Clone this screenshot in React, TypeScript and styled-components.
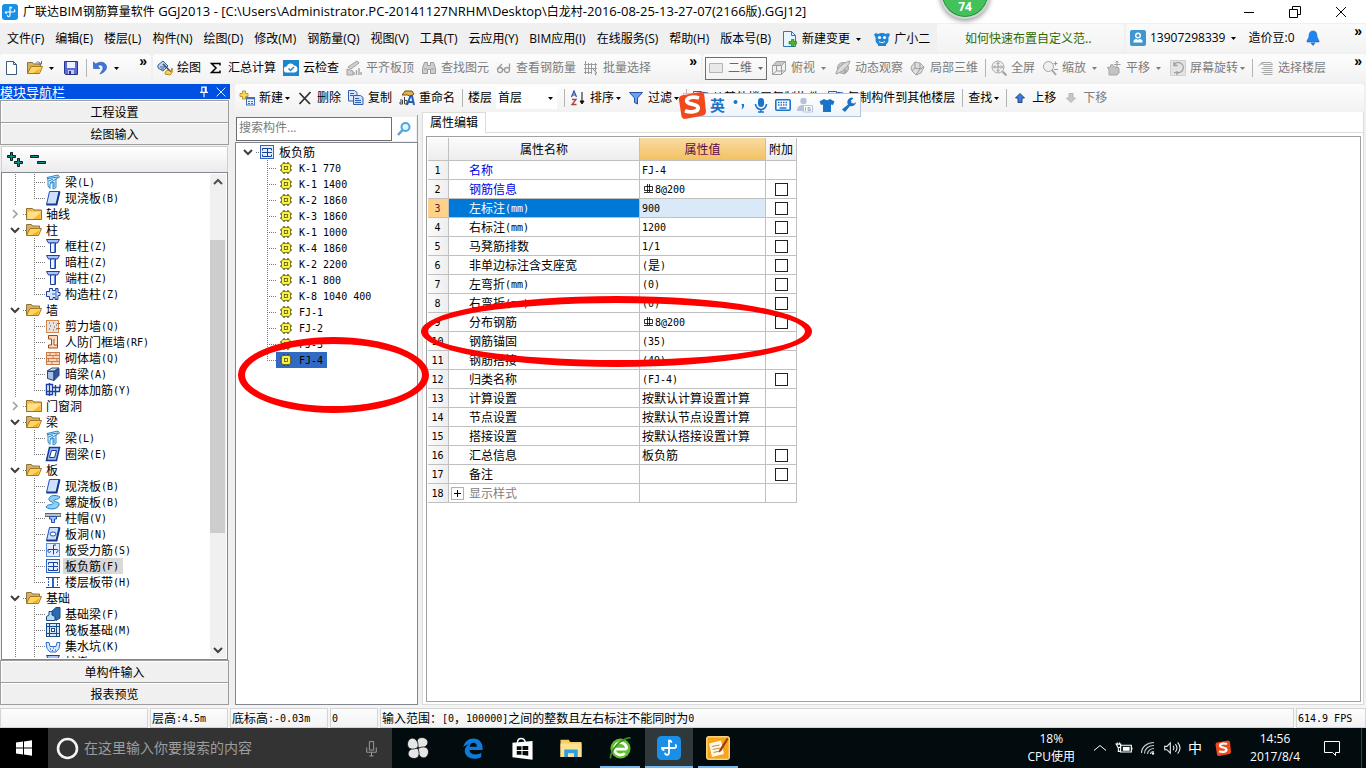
import React from 'react';
import styled, { createGlobalStyle, css } from 'styled-components';

const UI = '"Open Sans", "Noto Sans CJK SC", sans-serif';
const SONG = '"Noto Sans CJK SC", sans-serif';

const GlobalStyle = createGlobalStyle`
  *, *::before, *::after { box-sizing: border-box; }
  body { margin: 0; background: #f0f0f0; font: 12px/16px ${UI}; color: #000; }
  button, input, select { font: inherit; color: inherit; margin: 0; padding: 0; border: 0; background: none; border-radius: 0; }
  button { cursor: default; white-space: nowrap; }
  ul { list-style: none; margin: 0; padding: 0; }
`;

/* ---------- icons ---------- */

const folder = (
  <>
    <path d="M.5 13.500V2.500h6l1.500 1.500h7.500v9.500z" fill="#e9bb4c" stroke="#94702a" />
    <path d="M1.500 5.500h13v7.500h-13z" fill="#ffe08a" />
    <path d="M7 13 14.500 7v6z" fill="#f5b93a" />
  </>
);
const folderOpen = (
  <>
    <path d="M.5 13.500V2.500h5l1 1.500h7V7" fill="#d9b35a" stroke="#8d7440" />
    <path d="M.5 13.500 4 6.500H15.500L12.500 13.500z" fill="#ffd664" stroke="#a67a1c" />
    <path d="M6 13 13.500 8l-2 5z" fill="#f5b02c" />
  </>
);
const column = (
  <>
    <path d="M1.500 1.500h13L12.500 5h-9z" fill="#a9c4f5" stroke="#1d3f9c" />
    <path d="M5.500 5h5v9.500h-5z" fill="#eef4ff" stroke="#1d3f9c" />
    <path d="M9 5.500h1v8.500H9z" fill="#5d8be0" />
  </>
);
const beam = (
  <>
    <path d="M2 3.500 13 1l1.500 2-3.500 2v8.500L8 15V8L5 10v4.500L3 12V6z" fill="#d3efff" stroke="#2a86c8" />
    <path d="M3 4.500 13 3M5 9l6-4M9 8v5M4 7l4-2" stroke="#2a86c8" fill="none" />
  </>
);
const slab = (
  <>
    <path d="M4.500 1.500H14.500L11.500 14.500H1.500z" fill="#cfe0fb" stroke="#1a4fbd" />
    <path d="M1.500 14.500h10l3-13" fill="none" stroke="#123a94" strokeWidth="2" />
  </>
);
const negBar = (
  <>
    <rect x="1.500" y="1.500" width="13" height="13" fill="#e6efff" stroke="#2e63c9" />
    <path d="M3.500 6.500v-2h9v2M3 8.500h10M3.500 10.500v2h9v-2M8.500 4v9" stroke="#173f9f" fill="none" />
  </>
);
const grayStroke = { stroke: '#9b9b9b', fill: 'none' };

const ICONS: Record<string, React.ReactNode> = {
  folder,
  folderOpen,
  column,
  beam,
  slab,
  negBar,
  logo: (
    <>
      <rect width="16" height="16" rx="3" fill="#1a8fe8" />
      <path d="M8 3v8M9.600 4C9.400 3.300 8.800 3 8 3M3.300 8h8.200c1.300 0 1.700-1.200 1-2M3.300 8c0 .9.500 1.300 1.200 1.400M8 11c0 1.900-2.200 2-2.600.6" stroke="#fff" strokeWidth="1.200" fill="none" strokeLinecap="round" />
    </>
  ),
  structCol: (
    <>
      <path d="M4.500 2.500h3v2h3v-2h2.500v4h2v3h-2v4h-3v-2h-2v2h-3.500v-3h-3v-5h3z" fill="#d7e5ff" stroke="#1d3f9c" />
      <path d="M11 3v10M7 8h4" stroke="#3d6cc8" />
    </>
  ),
  shearWall: (
    <>
      <rect x="1.500" y="2.500" width="12" height="12" fill="#e6e2de" stroke="#d9864f" />
      <path d="M4 5h1M8 5h1M11 7h1M5 8h1M9 9h1M4 11h1M8 12h1M11 11h1" stroke="#555" />
      <path d="M12 5.500h3M12 10.500h3" stroke="#c2581b" />
    </>
  ),
  airWall: (
    <path d="M3.500 1.500h9v12.500h-9v-3h3v-6h-3z M9 5v6h3" fill="#ffd9bd" stroke="#a8480f" />
  ),
  brick: (
    <>
      <rect x="1.500" y="2.500" width="13" height="12" fill="#fbd9c0" stroke="#cc7a48" />
      <path d="M1 5.500h14M1 8.500h14M1 11.500h14M5 3v3M11 3v3M8 6v3M3.500 9v3M12 9v3M7 12v3" stroke="#cc7a48" />
    </>
  ),
  hiddenBeam: (
    <>
      <path d="M2 5 7 2h7l-5 3z" fill="#d6e1f4" stroke="#24457f" />
      <path d="M2.500 5.500H9v9l-6.500-2z" fill="#a9bfe4" stroke="#24457f" />
      <path d="M9 5.500 14 2.500v7l-5 5z" fill="#2f5799" stroke="#24457f" />
    </>
  ),
  masonryBar: (
    <path d="M1.500 2.500h6v10h-6zM4.500 1v13M1 9.500h14M10.500 3v11M7 5.500h8V2.500M14.500 5.500v4" fill="none" stroke="#1a3fa8" strokeWidth="1.400" />
  ),
  ringBeam: (
    <>
      <path d="M4.500 1.500H14.500L11.500 14.500H1.500z" fill="#9fbdf0" stroke="#143a9a" strokeWidth="1.500" />
      <path d="M6.500 4.500h5L9.500 11.500H4.500z" fill="#fff" stroke="#143a9a" />
    </>
  ),
  spiral: (
    <path d="M15 3C11 .5 5 1 4 4.500S9 7.500 8 9.500 2.500 9.500 1 13c4 3.500 12 2 13-2S8.500 8.500 9 6.500s4.500 0 6-3.500z" fill="#8fd0f5" stroke="#1c7fc4" />
  ),
  cap: (
    <>
      <path d="M0 3.500h16v3H0z" fill="#b9c2c9" stroke="#5c666e" />
      <path d="M4.500 6.500h7v2.500h-2v3.500h-3V9h-2z" fill="#a9c8f7" stroke="#1d4fae" />
    </>
  ),
  hole: (
    <>
      {slab}
      <ellipse cx="8" cy="8" rx="3" ry="2" fill="#fff" stroke="#1a4fbd" />
    </>
  ),
  forceBar: (
    <>
      <rect x="1.500" y="1.500" width="13" height="13" fill="#e6efff" stroke="#5b87dc" />
      <path d="M8.500 3v9.500M3 7.500h9c2 0 1 3-1 3M3 7.500v1.500c0 2 2.500 2 2.500 0M8.500 3h2.500" stroke="#173f9f" fill="none" />
    </>
  ),
  strip: (
    <>
      <path d="M1 3.500h14M1 13.500h14" stroke="#2e3f8f" />
      <path d="M3.500 4v9M12.500 4v9" stroke="#2e63c9" strokeDasharray="2 1" />
      <path d="M8 4v9" stroke="#2e63c9" strokeWidth="2" />
    </>
  ),
  foundBeam: (
    <>
      <path d="M6 6 11 1.500h4V12l-4 2.500z" fill="#2b6cb0" stroke="#154a86" />
      <path d="M1.500 14.500v-4L4 9V5.500h3V9l3 1.500v4z" fill="#b8dcf7" stroke="#154a86" />
    </>
  ),
  raft: (
    <>
      <rect x="1.500" y="1.500" width="13" height="13" fill="#d4e6f8" stroke="#174a86" />
      <path d="M4.500 2v12M11.500 2v12M2 4.500h12M2 11.500h12" stroke="#174a86" />
      <rect x="6.500" y="6.500" width="3" height="3" fill="#fff" stroke="#174a86" />
    </>
  ),
  sump: (
    <>
      <path d="M1 4.500h3l1 4h6l1-4h3l-1 6-3 3.500H5L2 10.500z" fill="#d9ebff" stroke="#2a6fcf" />
      <path d="M5 11h1M8 10h1M10 12h1M7 12.500h1" stroke="#1d3f9c" />
    </>
  ),
  gear: (
    <>
      <path d="M6 2v12M10 2v12M2 6h12M2 10h12" stroke="#3a3700" strokeWidth="1.200" />
      <rect x="3.500" y="3.500" width="9" height="9" rx="2" fill="#f8f24c" stroke="#5a5500" strokeWidth=".7" />
      <rect x="6.500" y="6.500" width="3" height="3" fill="#f8f24c" stroke="#5a5500" strokeWidth=".8" />
    </>
  ),
  newDoc: (
    <path d="M2.500 1.500h7l3 3v10h-10zM9.500 1.500v3h3" fill="#fff" stroke="#3c5a7c" />
  ),
  openDoc: (
    <>
      {folderOpen}
      <path d="M9 3.500c1-2 3-2 4.500 0M14.500 1v3h-3" fill="none" stroke="#4f6b8a" />
    </>
  ),
  save: (
    <>
      <path d="M1.500 1.500h13v13h-12l-1-1z" fill="#5a6fd6" stroke="#2a348f" />
      <path d="M4 2h8v6H4z" fill="#eef2ff" />
      <path d="M5 10h6v4H5z" fill="#c9cfe8" />
      <path d="M6 11h2v3H6z" fill="#2a348f" />
    </>
  ),
  undo: (
    <path d="M1.500 2v6.500H8L5.700 6C8 4 11 5 11 8c0 2-1.500 3.500-3 6C12 12.500 14.500 10 14.500 7c0-4.500-6-6.500-10.700-3z" fill="#3f78d8" stroke="#1d4fae" strokeWidth=".6" />
  ),
  paint: (
    <>
      <path d="M1 5 6 1l5 5-5 5-5-3z" fill="#bcd6f2" stroke="#3e618c" />
      <path d="M6 4 14 12" stroke="#23476f" strokeWidth="1.500" />
      <path d="M8 14c0-4 3-5 6-2l1-4c1 3 0 6-2 7z" fill="#ffce4a" stroke="#a8740f" strokeWidth=".8" />
      <path d="M3 7h5M4 9h3" stroke="#3e618c" />
    </>
  ),
  sigma: (
    <path d="M12 5.500v-2H3.500L8 8l-4.500 4.500H12v-2" fill="none" stroke="#000" strokeWidth="1.500" />
  ),
  cloud: (
    <>
      <rect width="16" height="16" fill="#1e86cc" />
      <path d="M4 12.500a3 3 0 0 1-.3-6A4 4 0 0 1 11 5.500a3.600 3.600 0 0 1 1 7z" fill="#fff" />
      <path d="m5.500 8.500 2 2L11 7" stroke="#1e86cc" strokeWidth="1.500" fill="none" />
    </>
  ),
  alignTop: (
    <>
      <path d="M2 7 11 1l2 2-8 6zM1 9l6 2v4H1z" fill="#d0d0d0" stroke="#a0a0a0" />
      <path d="M8 12v3M10.500 10v5M13 8v7M15 12v3" stroke="#a8a8a8" strokeWidth="1.500" />
    </>
  ),
  binoculars: (
    <path d="M3.500 2.500h3v3h3v-3h3l2 6v5h-5v-4h-3v4h-5v-5zM3 9h3M10 9h3" fill="#cfcfcf" stroke="#9a9a9a" />
  ),
  glasses: (
    <g {...grayStroke} strokeWidth="1.300">
      <circle cx="4" cy="10" r="2.500" />
      <circle cx="11" cy="10" r="2.500" />
      <path d="M6.500 9.500h2M1.500 9 6 4M13.500 10V3.500" />
    </g>
  ),
  batch: (
    <>
      <path d="M2.500 1v13M5.500 3v11M8.500 3v11M1 4.500h13M1 8.500h13M1 12.500h7M12.500 3v8" {...grayStroke} />
      <path d="m9 8 5 5-2 .5 1 2" fill="#ddd" stroke="#999" />
    </>
  ),
  flat2d: <path d="M1.500 3.500h13v9h-13z" fill="#e8e8e8" stroke="#b5b5b5" />,
  cube: (
    <>
      <path d="M1.500 5.500 5.500 1.500h9v9l-4 4h-9z" fill="#efefef" stroke="#a0a0a0" />
      <path d="M1.500 5.500h9v9M10.500 5.500l4-4M5.500 2v9h9M5.500 11l-4 3.500" {...grayStroke} />
      <path d="m2 5 4-3h8l-4 3z" fill="#c8c8c8" />
    </>
  ),
  orbit: (
    <>
      <circle cx="8" cy="8" r="5.500" fill="#c4c4c4" stroke="#a5a5a5" />
      <path d="M1 14C1 9 9 2 15 1 14 6 6 13 1 14z" fill="#dcdcdc" stroke="#a0a0a0" />
      <path d="m9 9 4 2-4 4z" fill="#aaa" />
    </>
  ),
  partial3d: (
    <>
      <path d="M1 7 5 2l5 1 4 4-3 6-5 2-4-4z" fill="#dedede" stroke="#a5a5a5" />
      <path d="M5 2v6l5 1V3M2 11l3-3M10 9l4-2M10 9l-4 6" {...grayStroke} />
    </>
  ),
  fullScreen: (
    <>
      <circle cx="7" cy="7" r="6" fill="#efefef" stroke="#a5a5a5" />
      <path d="M7 2.500v9M2.500 7h9M5.500 4 7 2.500 8.500 4M5.500 10 7 11.500 8.500 10M4 5.500 2.500 7 4 8.500M10 5.500 11.500 7 10 8.500" {...grayStroke} />
      <path d="m11.500 11.500 4 4" stroke="#a0a0a0" strokeWidth="2" />
    </>
  ),
  zoomIcon: (
    <>
      <circle cx="6.500" cy="6.500" r="5" fill="#efefef" stroke="#a5a5a5" />
      <path d="m10 10 4 5" stroke="#a5a5a5" strokeWidth="2" />
      <path d="M11.500 3.500h4M13.500 1.500v4M12 9.500h4" {...grayStroke} />
    </>
  ),
  pan: (
    <>
      <path d="M3 15V10L1.500 7.500l3-.5V5l2-.5L8 7h2l3 1v5l-2 2z" fill="#c4c4c4" stroke="#a5a5a5" />
      <path d="M11 1v7M8 4.500h6.500M9.500 2.500 11 1l1.500 1.500" {...grayStroke} />
    </>
  ),
  rotate: (
    <>
      <path d="M.5 .5h15v15H.5z" fill="#e4e4e4" stroke="#d0d0d0" />
      <path d="M4 5a5 5 0 1 1 2 7M4 2v3.500h3.500M4 13l3-1 0 3" fill="none" stroke="#9b9b9b" strokeWidth="1.300" />
    </>
  ),
  pickFloor: (
    <>
      <path d="M4 2.500h9l1.500 2H5.500zM5.500 6.500h9M3.500 8.500h11M5.500 10.500h9M3.500 12.500h11M5.500 14.500h9" fill="none" stroke="#a8a8a8" />
      <path d="M.5 6 4 2.500V5" fill="none" stroke="#a8a8a8" />
    </>
  ),
  docPlus: (
    <>
      <path d="M1.500 .5h8l4 4v11h-12zM9.500 .5v4h4" fill="#e9f5ff" stroke="#2a7ab8" />
      <path d="M9.500 8.500h2.500v2h2.500v2.500h-2.500v2.500h-2.500v-2.500h-2.500v-2.500h2.500z" fill="#48b82c" stroke="#2b7e17" strokeWidth=".7" />
    </>
  ),
  mascot: (
    <>
      <path d="M0 3.500C1 2 3 2 4 3c2-1.500 6-1.500 8 0 1-1 3-1 4 .5L14.300 7c.7 3-.3 5-2.300 6.500V15H4v-1.500C2 12 1 10 1.700 7z" fill="#1e86d8" />
      <circle cx="5.500" cy="6.500" r="1.600" fill="#fff" />
      <circle cx="10.500" cy="6.500" r="1.600" fill="#fff" />
      <path d="M5 10.500c2 1.500 4 1.500 6 0" stroke="#fff" fill="none" />
    </>
  ),
  user: (
    <>
      <rect width="16" height="16" rx="2" fill="#3f97cf" />
      <circle cx="8" cy="5.500" r="2.300" fill="none" stroke="#fff" strokeWidth="1.400" />
      <path d="M3.500 12.500V11c1-2 2.500-2 3-2l1.500 1 1.500-1c1 0 2.500.5 3 2v1.500z" fill="#fff" />
    </>
  ),
  bell: (
    <path d="M8 1c3.500 0 4 3 4 6l2 4v1H2v-1l2-4c0-3 .5-6 4-6zM6 13h4l-2 2.500z" fill="#1e86f0" stroke="#1560b8" strokeWidth=".6" />
  ),
  create: (
    <>
      <path d="M3.500 1h3v2.500H9v3H6.500V9h-3V6.500H1v-3h2.500z" fill="#ffd94d" stroke="#a8842a" strokeWidth=".8" />
      <rect x="7.500" y="7.500" width="8" height="7.500" fill="#eaf2ff" stroke="#456fb5" />
      <path d="M7.500 8.500h8" stroke="#456fb5" strokeWidth="1.500" />
      <path d="M9 11.500h2M12 11.500h2M9 13.500h2M12 13.500h2" stroke="#456fb5" />
    </>
  ),
  remove: <path d="M2.500 3 13 14M13.500 2 2.500 14" stroke="#333" strokeWidth="1.800" fill="none" />,
  copy: (
    <>
      <path d="M.5 .5h6l2.500 2v8.500H.5z" fill="#dce9fb" stroke="#2f5fb0" />
      <path d="M5.500 5.500h7l2.500 2V14.500h-9.500z" fill="#cfe0f8" stroke="#2f5fb0" />
      <path d="M7 8.500h4M7 10.500h6M7 12.500h6M2 3.500h4M2 5.500h3" stroke="#2f5fb0" />
    </>
  ),
  rename: (
    <>
      <path d="M3 5 6 1h7l2 3-4 3-2-2z" fill="#e3b14a" stroke="#6d541d" />
      <path d="M8 15 11.500 6H13l2 9M10 12h4" fill="none" stroke="#1f5fbf" strokeWidth="2" />
      <path d="M1 10h2.500v4H1v-2h2.500M5.500 7v7H8v-3.500H5.500" fill="none" stroke="#444" />
    </>
  ),
  sortAz: (
    <>
      <path d="M1.500 7 4 1l2.500 6M2.500 5h3" fill="none" stroke="#2c4f9e" strokeWidth="1.200" />
      <path d="M2 9.500h4L2 14.500h4.500" fill="none" stroke="#b04040" strokeWidth="1.300" />
      <path d="M12 2v11M10 11 12 14l2-3z" fill="#111" stroke="#111" />
    </>
  ),
  filter: <path d="M1.500 2.500h13L9.500 8v6l-3-1.500V8z" fill="#6fa2ea" stroke="#2350a8" />,
  copyFloor: (
    <>
      <path d="M1.500 1.500h8v10h-8z" fill="#e3edfb" stroke="#2f5fb0" />
      <path d="M3 4h5M3 6h5M3 8h5" stroke="#2f5fb0" />
      <path d="M9 4c3-3 6-1 5.500 3M13 3h3" stroke="#2f5fb0" fill="none" strokeWidth="1.500" />
    </>
  ),
  up: <path d="M8 3.500 12.500 8H10v4.500H6V8H3.500z" fill="#3e7be0" stroke="#1d4590" />,
  down: <path d="M8 12.500 12.500 8H10V3.500H6V8H3.500z" fill="#c8c8c8" stroke="#b5b5b5" />,
  magnifier: (
    <>
      <circle cx="9.500" cy="6" r="4" fill="#e6f5ff" stroke="#4aa8e0" strokeWidth="2" />
      <path d="M6.500 9 2 14" stroke="#4aa8e0" strokeWidth="2.500" />
    </>
  ),
  expandAll: (
    <path d="M3.500 .5h2v3h3v2h-3v3h-2v-3h-3v-2h3zM10.500 6.500h2v3h3v2h-3v3h-2v-3h-3v-2h3z" fill="#0e8f87" stroke="#022" />
  ),
  collapseAll: <path d="M.5 3.500h8v2h-8zM7.500 9.500h8v2h-8z" fill="#0e8f87" stroke="#022" />,
  chevronDown: <path d="m4 6 4 4 4-4" fill="none" stroke="#404040" strokeWidth="2" />,
  chevronRight: <path d="m6 4 4 4-4 4" fill="none" stroke="#a0a0a0" strokeWidth="1.600" />,
  chevronUp: <path d="m4 10 4-4 4 4" fill="none" stroke="#505050" strokeWidth="2" />,
  pin: <path d="M5.500 2.500h5v6h-5zM9.500 3v5M3.500 8.500h9M8 9v5" fill="none" stroke="#fff" strokeWidth="1.300" />,
  close: <path d="m3 3 10 10M13 3 3 13" fill="none" stroke="currentColor" />,
  minimize: <path d="M3 8.500h10" stroke="#000" />,
  restore: <path d="M5.500 5.500v-3h8v8h-3M2.500 5.500h8v8h-8z" fill="none" stroke="#000" />,
  comma: (
    <>
      <circle cx="4.500" cy="5" r="2" fill="#1b73c8" />
      <path d="M10.500 7h2.500c.5 2.500-.5 4.500-2.500 5.500l.8-3z" fill="#1b73c8" />
    </>
  ),
  mic: (
    <>
      <rect x="5" y="1" width="6" height="9" rx="3" fill="#1b73c8" />
      <path d="M2.500 7a5.500 5.500 0 0 0 11 0M8 12v3M5 15h6" fill="none" stroke="#1b73c8" strokeWidth="1.600" />
    </>
  ),
  keyboard: (
    <>
      <rect x=".8" y="2.800" width="14.400" height="10.400" rx="1" fill="#fff" stroke="#1b73c8" strokeWidth="1.600" />
      <path d="M3 5.500h10M3 8h10" stroke="#1b73c8" strokeWidth="1.500" strokeDasharray="1.500 1" />
      <path d="M4.500 11h7" stroke="#1b73c8" strokeWidth="1.500" />
    </>
  ),
  person: (
    <>
      <circle cx="6.500" cy="4" r="3.200" fill="#b4c3d8" />
      <path d="M0 14c0-5 3-6 6.500-6S13 10 13 14z" fill="#b4c3d8" />
      <path d="M6.500 8.500h9v6.500h-9z" fill="#fff" stroke="#b4c3d8" />
      <path d="M8.500 10v4M13.500 10.500h-2.500v3h2.500v-1.500H11" fill="none" stroke="#9fb1ca" />
    </>
  ),
  shirt: <path d="M5 2c1.500 1.500 4.500 1.500 6 0l4.500 2.500L14 8l-2-.5V15H4V7.500L2 8 .5 4.500z" fill="#1b73c8" />,
  wrench: <path d="M15 5a4.500 4.500 0 0 1-6 4l-5 6-3-2.500L7 7.500A4.500 4.500 0 0 1 12.500 1L10 3.500l.5 2.500 2.500.5z" fill="#1b73c8" />,
  sogou: (
    <>
      <path d="M2 2.500 13 .5q1.500 0 2 1.500l1 10q0 1.500-1.500 2L4 16q-1.500 0-2-1.500L.5 4.500Q.5 3 2 2.500z" fill="#f04a1c" />
      <path d="M12 4C9 3 5 3.500 5 5.700 5 8 11.500 7 11.500 9.700 11.500 12 7 12.500 4 11.300" fill="none" stroke="#fff" strokeWidth="2.200" />
    </>
  ),
  windows: <path d="M0 2.500 7 1.600v6H0zM8 1.400 16 .3v7.300H8zM0 8.500h7v6l-7-.9zM8 8.500h8v7.200l-8-1.100z" fill="#fff" />,
  cortana: <circle cx="8" cy="8" r="6.600" fill="none" stroke="#f4f4f4" strokeWidth="1.800" />,
  taskMic: <path d="M6 1.500h4v8H6zM3.500 7v4.500h9V7M8 11.500V15M6 15h4" fill="none" stroke="#a0a0a0" strokeWidth=".9" />,
  fan: (
    <g fill="#e6e6e6" stroke="#020b0e" strokeWidth=".5">
      <path d="M8.300 7.700C6.500 5 7 1 10.500 1 14 1 15.500 4 14 6S10 8.500 8.300 7.700z" />
      <path d="M8.300 8.300C11 6.500 15 7 15 10.500c0 3.500-3 5-5 3.500S7.500 10 8.300 8.300z" />
      <path d="M7.700 8.300C9.500 11 9 15 5.500 15 2 15 .5 12 2 10s4-2.500 5.700-1.700z" />
      <path d="M7.700 7.700C5 9.500 1 9 1 5.500 1 2 4 .5 6 2s2.500 4 1.700 5.700z" />
    </g>
  ),
  edge: (
    <path d="M1 7.500C1.500 3.500 4.500 1 8.300 1c4.200 0 6.700 3 6.700 7v1.500H5.500c0 2.200 2 3.200 4.200 3.200 1.800 0 3.300-.5 4.300-1.200v3c-1.200.8-3 1.300-5 1.300C4.500 15.800 2 13 2 10c0-2 1.200-3.800 3-4.800-2 .3-3.200 1.200-4 2.300zM5.600 7h5.200c0-1.700-.8-2.900-2.500-2.900S5.800 5.400 5.600 7z" fill="#0f7ad8" />
  ),
  store: (
    <>
      <path d="M4.500 4c0-4 5-4 5.500 0" fill="none" stroke="#fff" />
      <path d="M1 4 15 2.800v13L1 14z" fill="#fff" />
      <path d="M4 6.500h3.300V9H4zM8 6.300h4V9H8zM4 9.700h3.300v2.700H4zM8 9.700h4V13l-4-.4z" fill="#020b0e" />
    </>
  ),
  explorer: (
    <>
      <path d="M1 2.500h5.500l1 1.500H15v10H1z" fill="#f7cd5c" />
      <path d="M1 5h14v9H1z" fill="#fde294" />
      <path d="M3.500 14V9h9v5h-2.500v-2.500H6V14z" fill="#2f9ee0" />
    </>
  ),
  browser: (
    <>
      <circle cx="8" cy="8" r="7" fill="#5fbf2d" />
      <path d="M12.300 8.500a4.300 4.300 0 1 0-1.200 2.700M4 8.500h8.300" fill="none" stroke="#fff" strokeWidth="1.900" />
      <path d="M1 15C1 9 8 1 15 .5" fill="none" stroke="#2f8f17" strokeWidth="1.200" />
    </>
  ),
  note: (
    <>
      <rect x=".5" y=".5" width="15" height="15" rx="1.500" fill="#f6a41c" stroke="#fbd27a" />
      <path d="M2 5 10 3l2 9-8 2z" fill="#fff8e6" />
      <path d="m4 7 5-1M4.500 9l5-1M5 11l4-1" stroke="#b8954a" strokeWidth=".7" />
      <path d="M14 1 9 9l-.5 2 1.700-1L15 2z" fill="#9a3c12" />
    </>
  ),
  trayUp: <path d="m2 10.500 6-5 6 5" fill="none" stroke="#fff" />,
  battery: (
    <>
      <path d="M5 5.500h9.500v6H5zM15 7.500v2" fill="none" stroke="#fff" />
      <path d="M7 7h6v3.500H7z" fill="#fff" />
      <path d="M1 4.500h4v2.500l-2 1zM2 3v1.500M4 3v1.500M3 8v3h2" fill="none" stroke="#fff" />
    </>
  ),
  wifi: (
    <>
      <path d="M1.500 13C1.500 7 7 2.500 14 2.500M4.500 13.500C4.500 9 8.500 5.500 14 5.500M7.500 14c0-3 3-5.500 6.500-5.500M10.500 14c0-1.500 1.500-2.500 3.500-2.500" fill="none" stroke="#c8cccd" strokeWidth="1.200" />
      <circle cx="13" cy="13.500" r="1.200" fill="#fff" />
    </>
  ),
  speaker: (
    <path d="M1.500 6.500h2l3-3v9l-3-3h-2zM9 6c1 1.500 1 2.500 0 4M11 4.500c2 2.500 2 4.500 0 7M13 3c3 3.500 3 6.500 0 10" fill="none" stroke="#e6e6e6" />
  ),
  notify: <path d="M.5 1.500h15v11h-4v3l-3-3h-8z" fill="none" stroke="#fff" />,
};

const Svg = styled.svg`
  display: block;
  flex: none;
`;

const Icon = ({ name, size = 16 }: { name: string; size?: number }) => (
  <Svg width={size} height={size} viewBox="0 0 16 16" aria-hidden="true">
    {ICONS[name]}
  </Svg>
);

const CaretSvg = styled(Svg)`
  pointer-events: none;
`;
const Caret = () => (
  <CaretSvg width="5" height="3" viewBox="0 0 5 3" aria-hidden="true">
    <path d="M0 0h5L2.500 3z" fill="currentColor" />
  </CaretSvg>
);

/* Song-style text: half-width Latin glyphs beside full-width Chinese ones */
const Song = styled.span`
  font-family: ${SONG};
  white-space: pre;
`;
const Latin = styled.span`
  font: 10px/1 "DejaVu Sans Mono", monospace;
  vertical-align: 1px;
`;
const splitRuns = (text: string, Run: React.ElementType) =>
  text.split(/([\x20-\x7e]+)/).map((run, i) => (i % 2 ? <Run key={i}>{run}</Run> : run));

const T = ({ children }: { children: string }) => <Song>{splitRuns(children, Latin)}</Song>;

/* ---------- shell ---------- */

const Shell = styled.div`
  position: relative;
  display: flex;
  flex-direction: column;
  height: 100vh;
  overflow: hidden;
`;

const TitleBar = styled.header`
  position: relative;
  flex: none;
  display: flex;
  align-items: center;
  gap: 5px;
  height: 23px;
  padding: 0 17px 0 2px;
  background: #fff;
`;
const Title = styled.h1`
  flex: 1;
  margin: 0;
  font-size: 12px;
  font-weight: 400;
  white-space: nowrap;
`;
const TitleLatin = styled.span`
  font-size: 13px;
`;
const WindowButtons = styled.div`
  display: flex;
  gap: 30px;
`;

const FloatBall = styled.div`
  position: absolute;
  z-index: 3;
  top: -31px;
  left: 940px;
  width: 50px;
  height: 50px;
  border: 2px solid #d5d5d5;
  border-radius: 50%;
  background: #44c25a;
  box-shadow: inset 0 0 0 1px #1f8f3a, 0 2px 5px #0006;
  color: #fff;
  font: 700 12px/14px "Open Sans", sans-serif;
  text-align: center;
  padding-top: 29px;
`;

const MenuBar = styled.nav`
  flex: none;
  display: flex;
  height: 31px;
  padding-top: 1px;
`;
const MenuList = styled.div`
  display: flex;
  align-items: center;
  gap: 11px;
  flex: none;
  width: 937px;
  padding-left: 7px;
`;
const MenuItem = styled.button`
  display: flex;
  align-items: center;
  gap: 4px;
`;
const MenuPanel = styled.div<{ $grow?: boolean }>`
  display: flex;
  align-items: center;
  gap: 10px;
  flex: ${p => (p.$grow ? '1' : 'none')};
  min-width: ${p => (p.$grow ? '0' : '187px')};
  height: 28px;
  margin-right: ${p => (p.$grow ? '0' : '2px')};
  padding: ${p => (p.$grow ? '0 4px' : '0 28px')};
  border-radius: 3px;
  background: linear-gradient(#fafafa, #f3f3f3);
`;
const HelpLink = styled.a`
  font-family: ${SONG};
  color: #2f6b00;
  text-decoration: none;
  white-space: nowrap;
`;

const ToolRow = styled.div`
  flex: none;
  display: flex;
  gap: 2px;
  height: 30px;
  padding-bottom: 2px;
`;
const ToolPanel = styled.div<{ $width?: number; $pad?: number }>`
  display: flex;
  align-items: center;
  gap: 7px;
  flex: ${p => (p.$width ? `0 0 ${p.$width}px` : '1')};
  min-width: 0;
  height: 28px;
  padding: 0 4px;
  padding-left: ${p => p.$pad ?? 4}px;
  border-radius: 3px;
  background: linear-gradient(#fdfdfd, #f2f2f2);
`;
const ToolButton = styled.button<{ $off?: boolean; $wide?: boolean }>`
  display: flex;
  align-items: center;
  gap: 4px;
  flex: none;
  color: ${p => (p.$off ? '#7c7c7c' : '#000')};
  & > ${CaretSvg} { margin-left: -2px; }
  ${p => p.$wide && css`
    padding-right: 2px;
    & > ${CaretSvg} { margin-left: 2px; }
  `}
`;
const Separator = styled.i`
  flex: none;
  width: 1px;
  height: 18px;
  margin-right: -2px;
  background: #b4b4b4;
`;
const Overflow = styled.button`
  align-self: flex-start;
  margin-left: auto;
  font: 700 14px/14px "Liberation Sans", sans-serif;
`;
const ViewSelect = styled.label`
  display: flex;
  align-items: center;
  gap: 4px;
  flex: none;
  height: 23px;
  margin-right: -3px;
  padding: 0 3px 0 2px;
  border: 1px solid #6e6e6e;
  color: #6a6a6a;
`;
const Select = styled.select`
  appearance: none;
  width: 26px;
`;
const FloorSelect = styled.label`
  display: flex;
  align-items: center;
  flex: none;
  gap: 24px;
  height: 22px;
  margin-left: -3px;
  padding: 0 4px 0 2px;
  background: #fff;
`;

type ToolProps = { icon?: string; text?: string; off?: boolean; caret?: boolean; wide?: boolean; label?: string };
const Tool = ({ icon, text, off, caret, wide, label }: ToolProps) => (
  <ToolButton $off={off} $wide={wide} aria-label={text ?? label}>
    {icon && <Icon name={icon} />}
    {text && <span>{text}</span>}
    {caret && <Caret />}
  </ToolButton>
);

/* ---------- work area ---------- */

const Work = styled.div`
  position: relative;
  flex: 1;
  display: flex;
  gap: 5px;
  min-height: 0;
`;

const Dock = styled.aside`
  flex: 0 0 230px;
  display: flex;
  flex-direction: column;
  min-height: 0;
`;
const DockTitle = styled.h2`
  flex: none;
  display: flex;
  align-items: center;
  gap: 3px;
  height: 15px;
  margin: 0 0 1px;
  padding-right: 2px;
  background: #0050e3;
  color: #fff;
  font: 400 13px/15px ${SONG};
`;
const DockName = styled.span`
  flex: 1;
`;
const Section = styled.button`
  flex: none;
  height: 23px;
  width: 229px;
  margin-bottom: -1px;
  border: 1px solid #9d9d9d;
  background: #f0f0f0;
  box-shadow: inset 1px 1px #fff;
  font-family: ${SONG};
  &:last-child { margin-bottom: 0; }
`;
const DockTools = styled.div`
  flex: none;
  display: flex;
  align-items: center;
  gap: 7px;
  height: 26px;
  width: 227px;
  margin: 2px 0 0 1px;
  padding-left: 5px;
  border: 1px solid #cfcfcf;
  border-width: 1px 1px 0;
  background: linear-gradient(#fff, #ebebeb);
`;
const DockTree = styled.div`
  flex: 1;
  display: flex;
  min-height: 0;
  width: 227px;
  margin-left: 1px;
  padding: 1px;
  border: 1px solid #828790;
  background: #fff;
  overflow: hidden;
`;
const Tree = styled.ul`
  flex: 1;
  overflow: hidden;
`;
const ScrollBar = styled.div`
  flex: none;
  display: flex;
  flex-direction: column;
  width: 16px;
  background: #f0f0f0;
`;
const ScrollTrack = styled.div`
  flex: 1;
  padding: 50px 0 0;
`;
const ScrollThumb = styled.div`
  width: 15px;
  height: 73%;
  background: #cdcdcd;
`;

const dotsV = 'repeating-linear-gradient(#7a7a7a 0 1px, transparent 1px 2px)';
const dotsH = 'repeating-linear-gradient(90deg, #7a7a7a 0 1px, transparent 1px 2px)';

const Row = styled.li`
  display: flex;
  align-items: center;
  height: 16px;
  line-height: 16px;
`;
const Expander = styled.button`
  display: flex;
  justify-content: center;
  width: 20px;
  padding-left: 3px;
`;
const Stub = styled.i`
  width: 3px;
  height: 1px;
  background: ${dotsH};
`;
const Rail = styled.i<{ $line?: boolean }>`
  flex: 0 0 31px;
  height: 16px;
  background: ${p => (p.$line ? `${dotsV} 12px 0 / 1px 100% no-repeat` : 'none')};
`;
const Branch = styled.i<{ $last?: boolean; $short?: boolean }>`
  flex: 0 0 ${p => (p.$short ? 9 : 11)}px;
  height: 16px;
  background: ${dotsV} 0 0 / 1px ${p => (p.$last ? '8px' : '16px')} no-repeat,
    ${dotsH} 0 8px / 100% 1px no-repeat;
`;
const Leaf = styled.span<{ $picked?: boolean }>`
  display: flex;
  align-items: center;
  gap: 2px;
  & > ${Song} {
    padding: 0 4px 0 2px;
    background: ${p => (p.$picked ? '#d9d9d9' : 'none')};
  }
`;
const Part = styled.span<{ $picked?: boolean }>`
  display: flex;
  align-items: center;
  gap: 5px;
  padding: 0 4px 0 2px;
  background: ${p => (p.$picked ? '#316ac5' : 'none')};
`;
const NodeName = styled.span`
  display: flex;
  align-items: center;
  gap: 4px;
`;

type Group = { name: string; items?: [string, string][]; headless?: boolean };
const GROUPS: Group[] = [
  { name: '常用构件类型', headless: true, items: [['beam', '梁(L)'], ['slab', '现浇板(B)']] },
  { name: '轴线' },
  { name: '柱', items: [['column', '框柱(Z)'], ['column', '暗柱(Z)'], ['column', '端柱(Z)'], ['structCol', '构造柱(Z)']] },
  { name: '墙', items: [['shearWall', '剪力墙(Q)'], ['airWall', '人防门框墙(RF)'], ['brick', '砌体墙(Q)'], ['hiddenBeam', '暗梁(A)'], ['masonryBar', '砌体加筋(Y)']] },
  { name: '门窗洞' },
  { name: '梁', items: [['beam', '梁(L)'], ['ringBeam', '圈梁(E)']] },
  { name: '板', items: [['slab', '现浇板(B)'], ['spiral', '螺旋板(B)'], ['cap', '柱帽(V)'], ['hole', '板洞(N)'], ['forceBar', '板受力筋(S)'], ['negBar', '板负筋(F)'], ['strip', '楼层板带(H)']] },
  { name: '基础', items: [['foundBeam', '基础梁(F)'], ['raft', '筏板基础(M)'], ['sump', '集水坑(K)'], ['column', '柱墩(Y)']] },
];
const PARTS = ['K-1 770', 'K-1 1400', 'K-2 1860', 'K-3 1860', 'K-1 1000', 'K-4 1860', 'K-2 2200', 'K-1 800', 'K-8 1040 400', 'FJ-1', 'FJ-2', 'FJ-3', 'FJ-4'];

const Editor = styled.main`
  flex: 1;
  display: flex;
  flex-direction: column;
  min-width: 0;
`;
const EditorTools = styled(ToolPanel)`
  flex: none;
  margin-right: 2px;
`;
const Panes = styled.div`
  flex: 1;
  display: flex;
  gap: 4px;
  min-height: 0;
`;
const PartPane = styled.section`
  flex: none;
  width: 183px;
  display: flex;
  flex-direction: column;
  padding-top: 3px;
`;
const SearchRow = styled.div`
  display: flex;
  height: 27px;
  padding: 2px 1px 1px;
  border-right: 1px solid #a0a0a0;
`;
const SearchInput = styled.input`
  flex: 1;
  min-width: 0;
  padding: 0 2px 3px;
  border: 1px solid #6f6f6f;
  background: #fff;
  &::placeholder { color: #7a7a7a; opacity: 1; }
`;
const SearchButton = styled.button`
  display: flex;
  align-items: center;
  justify-content: center;
  width: 24px;
  background: #fff;
`;
const PartTree = styled.ul`
  flex: 1;
  border: 1px solid #828790;
  background: #fff;
  && { padding-top: 1px; }
`;

const PropPane = styled.section`
  flex: 1;
  display: flex;
  flex-direction: column;
  min-width: 0;
  margin-right: 2px;
  border: 1px solid #dcdcdc;
  border-top: 0;
  background: #fff;
`;
const TabStrip = styled.div`
  display: flex;
  height: 21px;
  border-bottom: 1px solid #dcdcdc;
`;
const Tab = styled.button`
  height: 21px;
  width: 63px;
  border: 1px solid #dcdcdc;
  border-width: 1px 1px 0 0;
  background: #fff;
`;
const Sheet = styled.div`
  flex: 1;
  margin: 3px 2px 2px 3px;
  padding: 1px;
  border: 1px solid #a0a0a4;
`;
const Grid = styled.table`
  table-layout: fixed;
  width: 369px;
  border-collapse: separate;
  border-spacing: 0;
  font-family: ${SONG};
  line-height: 16px;
`;
const Head = styled.th<{ $hot?: boolean }>`
  height: 23px;
  padding: 0;
  border: 1px solid #c0c0c0;
  border-width: 0 1px 1px 0;
  font-weight: 400;
  color: ${p => (p.$hot ? '#5b0a4c' : '#000')};
  background: ${p => (p.$hot ? 'linear-gradient(#f9dba2, #f3c163)' : 'linear-gradient(#fbfbfb, #ededed)')};
`;
const RowHead = styled.th<{ $hot?: boolean }>`
  height: 19px;
  padding: 0 1px 1px 0;
  border: 1px solid #c0c0c0;
  border-width: 0 1px 1px 0;
  font-weight: 400;
  color: ${p => (p.$hot ? '#6b1040' : '#000')};
  background: ${p => (p.$hot ? '#ffd28a' : 'linear-gradient(90deg, #fbfbfb, #eee)')};
`;
const NameCell = styled.td<{ $tone?: 'link' | 'hot' | 'mute' }>`
  padding: 0 0 0 20px;
  border: 1px solid #c0c0c0;
  border-width: 0 1px 1px 0;
  color: ${p => ({ link: '#0000e6', hot: '#fff', mute: '#808080' }[p.$tone as string] ?? '#000')};
  background: ${p => (p.$tone === 'hot' ? '#0078d7' : '#fff')};
`;
const ValueCell = styled.td<{ $hot?: boolean }>`
  padding: 0 0 0 2px;
  border: 1px solid #c0c0c0;
  border-width: 0 1px 1px 0;
  background: ${p => (p.$hot ? '#d9e9f8' : '#fff')};
`;
const CheckCell = styled.td`
  padding: 0;
  border: 1px solid #c0c0c0;
  border-width: 0 1px 1px 0;
  text-align: center;
`;
const Check = styled.input`
  appearance: none;
  display: block;
  width: 13px;
  height: 13px;
  margin: 0 auto;
  border: 1px solid #222;
  background: #fff;
`;
const NameLine = styled.div<{ $expander?: boolean }>`
  display: flex;
  align-items: center;
  gap: 5px;
  margin-left: ${p => (p.$expander ? '-18px' : '0')};
`;
const PlusBox = styled.button`
  display: flex;
  align-items: center;
  justify-content: center;
  width: 13px;
  height: 13px;
  border: 1px solid #b0b0b0;
  color: #000;
`;
const Rebar = styled.span`
  display: flex;
  align-items: center;
  gap: 2px;
  padding-left: 2px;
`;
const RebarMark = () => (
  <Svg width="9" height="10" viewBox="0 0 9 10" aria-hidden="true">
    <path d="M.5 2.500h8v4h-8zM3.500 0v8M5.500 0v8M0 8.500h9" fill="none" stroke="#000" strokeWidth=".8" />
  </Svg>
);

type Prop = { name: string; value: string; check?: boolean; tone?: 'link' | 'hot' | 'mute'; rebar?: boolean; expander?: boolean };
const PROPS: Prop[] = [
  { name: '名称', value: 'FJ-4', tone: 'link' },
  { name: '钢筋信息', value: '8@200', check: true, tone: 'link', rebar: true },
  { name: '左标注(mm)', value: '900', check: true, tone: 'hot' },
  { name: '右标注(mm)', value: '1200', check: true },
  { name: '马凳筋排数', value: '1/1', check: true },
  { name: '非单边标注含支座宽', value: '(是)', check: true },
  { name: '左弯折(mm)', value: '(0)', check: true },
  { name: '右弯折(mm)', value: '(0)', check: true },
  { name: '分布钢筋', value: '8@200', check: true, rebar: true },
  { name: '钢筋锚固', value: '(35)' },
  { name: '钢筋搭接', value: '(49)' },
  { name: '归类名称', value: '(FJ-4)', check: true },
  { name: '计算设置', value: '按默认计算设置计算' },
  { name: '节点设置', value: '按默认节点设置计算' },
  { name: '搭接设置', value: '按默认搭接设置计算' },
  { name: '汇总信息', value: '板负筋', check: true },
  { name: '备注', value: '', check: true },
  { name: '显示样式', value: '', tone: 'mute', expander: true },
];

/* hand-drawn red rings laid over the window */
const Ring = styled.div<{ $x: number; $y: number; $w: number; $h: number }>`
  position: absolute;
  z-index: 2;
  left: ${p => p.$x}px;
  top: ${p => p.$y}px;
  width: ${p => p.$w}px;
  height: ${p => p.$h}px;
  border: 7px solid #f00;
  border-radius: 50%;
  pointer-events: none;
`;

const ImeBar = styled.div`
  position: absolute;
  z-index: 2;
  left: 678px;
  top: 7px;
  display: flex;
  align-items: center;
`;
const ImeStrip = styled.div`
  display: flex;
  align-items: center;
  gap: 6px;
  height: 24px;
  margin-left: -23px;
  padding: 0 3px 0 26px;
  border: 1px solid #b7c3d6;
  background: linear-gradient(#fff, #eef4fb);
`;
const ImeMode = styled.button`
  color: #1b73c8;
  font: 700 15px/20px ${SONG};
`;
const ImeLogo = styled.button`
  position: relative;
  z-index: 1;
`;

/* ---------- bottom bars ---------- */

const StatusBar = styled.footer`
  flex: none;
  display: flex;
  gap: 2px;
  height: 23px;
  padding: 3px 0 0;
  background: #f4f4f4;
`;
const Status = styled.div<{ $width?: number }>`
  flex: ${p => (p.$width ? `0 0 ${p.$width}px` : '1')};
  min-width: 0;
  height: 20px;
  padding-left: 1px;
  border: 1px solid #d4d4d4;
  background: linear-gradient(#fdfdfd, #f2f2f2);
  line-height: 18px;
  overflow: hidden;
`;

const TaskBar = styled.div`
  flex: none;
  display: flex;
  align-items: stretch;
  height: 40px;
  background: #020b0e;
  color: #fff;
`;
const Start = styled.button`
  display: flex;
  align-items: center;
  justify-content: center;
  width: 48px;
  background: #000;
`;
const TaskSearch = styled.label`
  display: flex;
  align-items: center;
  gap: 5px;
  width: 344px;
  padding: 0 12px 0 8px;
  background: #333;
`;
const TaskInput = styled.input`
  flex: 1;
  min-width: 0;
  font-size: 14px;
  outline: 0;
  &::placeholder { color: #9d9d9d; opacity: 1; }
`;
const TaskApp = styled.button<{ $state?: 'run' | 'active' }>`
  display: flex;
  align-items: center;
  justify-content: center;
  width: 49px;
  border-right: 1px solid #020b0e;
  background: ${p => (p.$state === 'active' ? '#2f393c' : 'none')};
  ${p => p.$state && css`
    background-image: linear-gradient(#76b9ed, #76b9ed);
    background-repeat: no-repeat;
    background-position: 50% 100%;
    background-size: ${p.$state === 'active' ? '100%' : '40px'} 2px;
  `}
`;
const PinnedApp = styled(TaskApp)`
  width: 53px;
  margin-right: 4px;
`;
const Apps = styled.div`
  flex: 1;
  display: flex;
`;
const Tray = styled.div`
  display: flex;
  align-items: center;
  gap: 7px;
`;
const TrayText = styled.div`
  font-size: 12px;
  line-height: 18px;
  text-align: center;
  white-space: nowrap;
`;
const Cpu = styled(TrayText)`
  padding-right: 10px;
`;
const Clock = styled(TrayText)`
  padding: 0 7px 0 12px;
`;
const ImeLang = styled.span`
  padding: 0 6px 0 0;
  font-size: 14px;
`;
const NotifyButton = styled.button`
  align-self: stretch;
  width: 48px;
  padding: 0 21px 0 10px;
  border-right: 1px solid #3c4143;
  margin-right: 4px;
`;

const MENUS = ['文件(F)', '编辑(E)', '楼层(L)', '构件(N)', '绘图(D)', '修改(M)', '钢筋量(Q)', '视图(V)', '工具(T)', '云应用(Y)', 'BIM应用(I)', '在线服务(S)', '帮助(H)', '版本号(B)'];
const TITLE = '广联达BIM钢筋算量软件 GGJ2013 - [C:\\Users\\Administrator.PC-20141127NRHM\\Desktop\\白龙村-2016-08-25-13-27-07(2166版).GGJ12]';

export default function App() {
  return (
    <Shell>
      <GlobalStyle />
      <TitleBar>
        <Icon name="logo" />
        <Title>{splitRuns(TITLE, TitleLatin)}</Title>
        <WindowButtons>
          <button aria-label="最小化"><Icon name="minimize" /></button>
          <button aria-label="还原"><Icon name="restore" /></button>
          <button aria-label="关闭"><Icon name="close" /></button>
        </WindowButtons>
        <FloatBall>74</FloatBall>
      </TitleBar>

      <MenuBar>
        <MenuList>
          {MENUS.map(m => <MenuItem key={m}>{m}</MenuItem>)}
          <MenuItem><Icon name="docPlus" />新建变更<ToolButton as="span" $wide><Caret /></ToolButton></MenuItem>
          <MenuItem><Icon name="mascot" />广小二</MenuItem>
        </MenuList>
        <MenuPanel><HelpLink href="#tips">如何快速布置自定义范..</HelpLink></MenuPanel>
        <MenuPanel $grow>
          <MenuItem><Icon name="user" />13907298339<ToolButton as="span" $wide><Caret /></ToolButton></MenuItem>
          <MenuItem>造价豆:0</MenuItem>
          <MenuItem aria-label="通知"><Icon name="bell" /></MenuItem>
          <Overflow aria-label="更多">»</Overflow>
        </MenuPanel>
      </MenuBar>

      <ToolRow>
        <ToolPanel $width={151}>
          <Tool icon="newDoc" label="新建工程" />
          <Tool icon="openDoc" label="打开" caret wide />
          <Tool icon="save" label="保存" />
          <Separator />
          <Tool icon="undo" label="撤销" caret wide />
          <Overflow aria-label="更多">»</Overflow>
        </ToolPanel>
        <ToolPanel $width={548}>
          <Tool icon="paint" text="绘图" />
          <Tool icon="sigma" text="汇总计算" />
          <Tool icon="cloud" text="云检查" />
          <Tool icon="alignTop" text="平齐板顶" off />
          <Tool icon="binoculars" text="查找图元" off />
          <Tool icon="glasses" text="查看钢筋量" off />
          <Tool icon="batch" text="批量选择" off />
          <Overflow aria-label="更多">»</Overflow>
        </ToolPanel>
        <ToolPanel $pad={2}>
          <ViewSelect>
            <Icon name="flat2d" />
            <Select aria-label="视图维度"><option>二维</option></Select>
            <Caret />
          </ViewSelect>
          <Tool icon="cube" text="俯视" off caret wide />
          <Tool icon="orbit" text="动态观察" off />
          <Tool icon="partial3d" text="局部三维" off />
          <Separator />
          <Tool icon="fullScreen" text="全屏" off />
          <Tool icon="zoomIcon" text="缩放" off caret wide />
          <Tool icon="pan" text="平移" off caret wide />
          <Tool icon="rotate" text="屏幕旋转" off caret />
          <Separator />
          <Tool icon="pickFloor" text="选择楼层" off />
          <Overflow aria-label="更多">»</Overflow>
        </ToolPanel>
      </ToolRow>

      <Work>
        <Dock>
          <DockTitle>
            <DockName>模块导航栏</DockName>
            <button aria-label="固定"><Icon name="pin" size={14} /></button>
            <button aria-label="关闭"><Icon name="close" size={14} /></button>
          </DockTitle>
          <Section>工程设置</Section>
          <Section>绘图输入</Section>
          <DockTools>
            <button aria-label="全部展开"><Icon name="expandAll" /></button>
            <button aria-label="全部折叠"><Icon name="collapseAll" /></button>
          </DockTools>
          <DockTree>
            <Tree>
              {GROUPS.map((g, gi) => (
                <React.Fragment key={g.name + gi}>
                  {!g.headless && (
                    <Row>
                      <Expander aria-label={g.name}><Icon name={g.items ? 'chevronDown' : 'chevronRight'} /></Expander>
                      <Stub />
                      <NodeName><Icon name={g.items ? 'folderOpen' : 'folder'} /><T>{g.name}</T></NodeName>
                    </Row>
                  )}
                  {g.items?.map(([icon, text], i) => (
                    <Row key={text}>
                      <Rail $line />
                      <Branch $last={i === g.items!.length - 1} />
                      <Leaf $picked={text === '板负筋(F)'}><Icon name={icon} /><T>{text}</T></Leaf>
                    </Row>
                  ))}
                </React.Fragment>
              ))}
            </Tree>
            <ScrollBar>
              <Icon name="chevronUp" />
              <ScrollTrack><ScrollThumb /></ScrollTrack>
              <Icon name="chevronDown" />
            </ScrollBar>
          </DockTree>
          <Section>单构件输入</Section>
          <Section>报表预览</Section>
        </Dock>

        <Editor>
          <EditorTools>
            <Tool icon="create" text="新建" caret />
            <Tool icon="remove" text="删除" />
            <Tool icon="copy" text="复制" />
            <Tool icon="rename" text="重命名" />
            <Separator />
            <Tool text="楼层" />
            <FloorSelect>
              <Select aria-label="楼层"><option>首层</option></Select>
              <Caret />
            </FloorSelect>
            <Separator />
            <Tool icon="sortAz" text="排序" caret />
            <Tool icon="filter" text="过滤" caret />
            <Separator />
            <Tool icon="copyFloor" text="从其他楼层复制构件" />
            <Tool icon="copyFloor" text="复制构件到其他楼层" />
            <Separator />
            <Tool text="查找" caret />
            <Separator />
            <Tool icon="up" text="上移" />
            <Tool icon="down" text="下移" off />
          </EditorTools>
          <Panes>
            <PartPane>
              <SearchRow>
                <SearchInput placeholder="搜索构件..." aria-label="搜索构件" />
                <SearchButton aria-label="搜索"><Icon name="magnifier" /></SearchButton>
              </SearchRow>
              <PartTree>
                <Row>
                  <Expander aria-label="板负筋"><Icon name="chevronDown" /></Expander>
                  <Stub />
                  <NodeName><Icon name="negBar" /><T>板负筋</T></NodeName>
                </Row>
                {PARTS.map((p, i) => (
                  <Row key={p}>
                    <Rail />
                    <Branch $short $last={i === PARTS.length - 1} />
                    <Part $picked={p === 'FJ-4'}><Icon name="gear" /><T>{p}</T></Part>
                  </Row>
                ))}
              </PartTree>
            </PartPane>

            <PropPane>
              <TabStrip><Tab>属性编辑</Tab></TabStrip>
              <Sheet>
                <Grid>
                  <colgroup>
                    <col width="21" /><col width="191" /><col width="126" /><col width="31" />
                  </colgroup>
                  <thead>
                    <tr><Head aria-label="序号" /><Head>属性名称</Head><Head $hot>属性值</Head><Head>附加</Head></tr>
                  </thead>
                  <tbody>
                    {PROPS.map((p, i) => (
                      <tr key={p.name}>
                        <RowHead $hot={p.tone === 'hot'}><T>{String(i + 1)}</T></RowHead>
                        <NameCell $tone={p.tone}>
                          <NameLine $expander={p.expander}>
                            {p.expander && (
                              <PlusBox aria-label="展开">
                                <Svg width="7" height="7" viewBox="0 0 7 7"><path d="M0 3.500h7M3.500 0v7" stroke="#000" /></Svg>
                              </PlusBox>
                            )}
                            <T>{p.name}</T>
                          </NameLine>
                        </NameCell>
                        <ValueCell $hot={p.tone === 'hot'}>
                          {p.rebar ? <Rebar><RebarMark /><T>{p.value}</T></Rebar> : <T>{p.value}</T>}
                        </ValueCell>
                        <CheckCell>{p.check && <Check type="checkbox" aria-label={`附加 ${p.name}`} />}</CheckCell>
                      </tr>
                    ))}
                  </tbody>
                </Grid>
              </Sheet>
            </PropPane>
          </Panes>
        </Editor>

        <ImeBar>
          <ImeLogo aria-label="输入法"><Icon name="sogou" size={28} /></ImeLogo>
          <ImeStrip>
            <ImeMode>英</ImeMode>
            {['comma', 'mic', 'keyboard', 'person', 'shirt', 'wrench'].map(n => (
              <button key={n} aria-label={n}><Icon name={n} /></button>
            ))}
          </ImeStrip>
        </ImeBar>
        <Ring $x={238} $y={253} $w={191} $h={76} />
        <Ring $x={421} $y={212} $w={391} $h={71} />
      </Work>

      <StatusBar>
        <Status $width={148} />
        <Status $width={78}><T>层高:4.5m</T></Status>
        <Status $width={98}><T>底标高:-0.03m</T></Status>
        <Status $width={48}><T>0</T></Status>
        <Status><T>输入范围：[0，100000]之间的整数且左右标注不能同时为0</T></Status>
        <Status $width={70}><T>614.9 FPS</T></Status>
      </StatusBar>

      <TaskBar>
        <Start aria-label="开始"><Icon name="windows" /></Start>
        <TaskSearch>
          <Icon name="cortana" size={23} />
          <TaskInput placeholder="在这里输入你要搜索的内容" />
          <Icon name="taskMic" size={17} />
        </TaskSearch>
        <Apps>
          <PinnedApp aria-label="应用"><Icon name="fan" size={24} /></PinnedApp>
          <TaskApp aria-label="Edge"><Icon name="edge" size={22} /></TaskApp>
          <TaskApp aria-label="商店"><Icon name="store" size={23} /></TaskApp>
          <TaskApp aria-label="文件资源管理器"><Icon name="explorer" size={24} /></TaskApp>
          <TaskApp $state="run" aria-label="浏览器"><Icon name="browser" size={23} /></TaskApp>
          <TaskApp $state="active" aria-label="广联达"><Icon name="logo" size={24} /></TaskApp>
          <TaskApp $state="run" aria-label="便签"><Icon name="note" size={24} /></TaskApp>
        </Apps>
        <Tray>
          <Cpu>18%<br />CPU使用</Cpu>
          <Icon name="trayUp" />
          <Icon name="battery" size={18} />
          <Icon name="wifi" />
          <Icon name="speaker" size={18} />
          <ImeLang>中</ImeLang>
          <Icon name="sogou" />
          <Clock>14:56<br />2017/8/4</Clock>
          <NotifyButton aria-label="通知"><Icon name="notify" /></NotifyButton>
        </Tray>
      </TaskBar>
    </Shell>
  );
}
